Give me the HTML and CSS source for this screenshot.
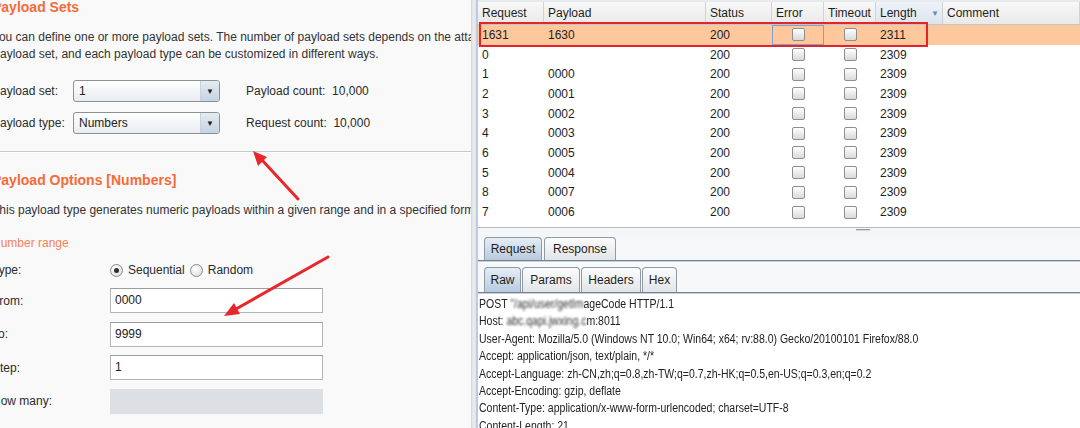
FILE: index.html
```html
<!DOCTYPE html>
<html>
<head>
<meta charset="utf-8">
<link rel="stylesheet" href="styles.css">
</head>
<body>
<div class="app">
  <section class="left">
    <div class="lc">
      <h2 class="title t1">Payload Sets</h2>
      <p class="desc d1">You can define one or more payload sets. The number of payload sets depends on the attack type defined in the Positions tab.<br>Payload set, and each payload type can be customized in different ways.</p>
      <div class="setrow">
        <span class="lbl">Payload set:</span>
        <div class="select"><span class="val">1</span><span class="drop">&#9660;</span></div>
        <span class="count">Payload count:&nbsp; 10,000</span>
      </div>
      <div class="setrow">
        <span class="lbl">Payload type:</span>
        <div class="select"><span class="val">Numbers</span><span class="drop">&#9660;</span></div>
        <span class="count">Request count:&nbsp; 10,000</span>
      </div>
      <div class="sep"></div>
      <h2 class="title t2">Payload Options [Numbers]</h2>
      <p class="desc d2">This payload type generates numeric payloads within a given range and in a specified format.</p>
      <div class="sub">Number range</div>
      <div class="frow typerow">
        <span class="flbl">Type:</span>
        <div class="radios">
          <span class="radio on"></span><span class="rtxt">Sequential</span>
          <span class="radio"></span><span class="rtxt">Random</span>
        </div>
      </div>
      <div class="frow">
        <span class="flbl">From:</span>
        <div class="input">0000</div>
      </div>
      <div class="frow">
        <span class="flbl">To:</span>
        <div class="input">9999</div>
      </div>
      <div class="frow">
        <span class="flbl">Step:</span>
        <div class="input">1</div>
      </div>
      <div class="frow">
        <span class="flbl">How many:</span>
        <div class="input disabled"></div>
      </div>
    </div>
  </section>
  <div class="divider"></div>
  <section class="right">
    <div class="table">
      <div class="row head">
        <div class="c">Request</div>
        <div class="c">Payload</div>
        <div class="c">Status</div>
        <div class="c">Error</div>
        <div class="c">Timeout</div>
        <div class="c sorted">Length<span class="sort">&#9660;</span></div>
        <div class="c">Comment</div>
      </div>
      <div class="row sel">
        <div class="c">1631</div><div class="c">1630</div><div class="c">200</div>
        <div class="c cb focus"><span class="chk"></span></div><div class="c cb"><span class="chk"></span></div>
        <div class="c">2311</div><div class="c"></div>
      </div>
      <div class="row">
        <div class="c">0</div><div class="c"></div><div class="c">200</div>
        <div class="c cb"><span class="chk"></span></div><div class="c cb"><span class="chk"></span></div>
        <div class="c">2309</div><div class="c"></div>
      </div>
      <div class="row">
        <div class="c">1</div><div class="c">0000</div><div class="c">200</div>
        <div class="c cb"><span class="chk"></span></div><div class="c cb"><span class="chk"></span></div>
        <div class="c">2309</div><div class="c"></div>
      </div>
      <div class="row">
        <div class="c">2</div><div class="c">0001</div><div class="c">200</div>
        <div class="c cb"><span class="chk"></span></div><div class="c cb"><span class="chk"></span></div>
        <div class="c">2309</div><div class="c"></div>
      </div>
      <div class="row">
        <div class="c">3</div><div class="c">0002</div><div class="c">200</div>
        <div class="c cb"><span class="chk"></span></div><div class="c cb"><span class="chk"></span></div>
        <div class="c">2309</div><div class="c"></div>
      </div>
      <div class="row">
        <div class="c">4</div><div class="c">0003</div><div class="c">200</div>
        <div class="c cb"><span class="chk"></span></div><div class="c cb"><span class="chk"></span></div>
        <div class="c">2309</div><div class="c"></div>
      </div>
      <div class="row">
        <div class="c">6</div><div class="c">0005</div><div class="c">200</div>
        <div class="c cb"><span class="chk"></span></div><div class="c cb"><span class="chk"></span></div>
        <div class="c">2309</div><div class="c"></div>
      </div>
      <div class="row">
        <div class="c">5</div><div class="c">0004</div><div class="c">200</div>
        <div class="c cb"><span class="chk"></span></div><div class="c cb"><span class="chk"></span></div>
        <div class="c">2309</div><div class="c"></div>
      </div>
      <div class="row">
        <div class="c">8</div><div class="c">0007</div><div class="c">200</div>
        <div class="c cb"><span class="chk"></span></div><div class="c cb"><span class="chk"></span></div>
        <div class="c">2309</div><div class="c"></div>
      </div>
      <div class="row">
        <div class="c">7</div><div class="c">0006</div><div class="c">200</div>
        <div class="c cb"><span class="chk"></span></div><div class="c cb"><span class="chk"></span></div>
        <div class="c">2309</div><div class="c"></div>
      </div>
    </div>
    <div class="splitter"><span class="grip"></span></div>
    <div class="tabs main">
      <div class="tab active w-req">Request</div>
      <div class="tab w-resp">Response</div>
    </div>
    <div class="tabs subtabs">
      <div class="tab active w-raw">Raw</div>
      <div class="tab w-params">Params</div>
      <div class="tab w-headers">Headers</div>
      <div class="tab w-hex">Hex</div>
    </div>
    <div class="raw">
      <div class="rawin">
        <div>POST <span class="blur">"/api/user/getIm</span>ageCode HTTP/1.1</div>
        <div>Host: <span class="blur">abc.qapi.jwxing.c</span>m:8011</div>
        <div>User-Agent: Mozilla/5.0 (Windows NT 10.0; Win64; x64; rv:88.0) Gecko/20100101 Firefox/88.0</div>
        <div>Accept: application/json, text/plain, */*</div>
        <div>Accept-Language: zh-CN,zh;q=0.8,zh-TW;q=0.7,zh-HK;q=0.5,en-US;q=0.3,en;q=0.2</div>
        <div>Accept-Encoding: gzip, deflate</div>
        <div>Content-Type: application/x-www-form-urlencoded; charset=UTF-8</div>
        <div>Content-Length: 21</div>
      </div>
    </div>
    <div class="redbox"></div>
  </section>
  <svg class="arrows" width="1080" height="428" viewBox="0 0 1080 428">
    <line x1="298" y1="199" x2="262" y2="160" stroke="#e8262b" stroke-width="3" stroke-linecap="round"/>
    <polygon points="253,151 267,157 258,166" fill="#e8262b"/>
    <line x1="328" y1="257" x2="236" y2="309" stroke="#e8262b" stroke-width="3" stroke-linecap="round"/>
    <polygon points="224,316 234,303 240,314" fill="#e8262b"/>
  </svg>
</div>
</body>
</html>
```

FILE: styles.css
```css
* { box-sizing: border-box; }
html, body { margin: 0; padding: 0; }
body {
  width: 1080px;
  height: 428px;
  overflow: hidden;
  font-family: "Liberation Sans", Arial, sans-serif;
  font-size: 12px;
  color: #2b2b2b;
  background: #f8f8f8;
}
.app {
  position: relative;
  display: flex;
  width: 1080px;
  height: 428px;
}

/* ---------- left pane ---------- */
.left {
  width: 471px;
  flex: none;
  overflow: hidden;
  background: #f9f9f9;
}
.lc {
  margin-left: -8px;
  width: 700px;
}
.title {
  margin: 0;
  font-size: 14px;
  line-height: 18px;
  font-weight: bold;
  color: #f66a38;
  white-space: nowrap;
}
.t1 { margin-top: -2px; }
.desc {
  margin: 0;
  line-height: 17px;
  white-space: nowrap;
  color: #333;
}
.d1 { margin-top: 12.5px; }
.setrow {
  display: flex;
  align-items: center;
  height: 22px;
  margin-top: 10px;
}
.d1 + .setrow { margin-top: 17.5px; }
.lbl { width: 81px; flex: none; }
.select {
  width: 147px;
  height: 22px;
  flex: none;
  display: flex;
  align-items: center;
  border: 1px solid #8b9097;
  border-radius: 3px;
  background: linear-gradient(#ffffff, #e9ecf0);
  overflow: hidden;
}
.select .val { flex: 1; padding-left: 5px; color: #222; }
.select .drop {
  width: 19px;
  height: 100%;
  display: flex;
  align-items: center;
  justify-content: center;
  font-size: 8px;
  color: #222;
  background: linear-gradient(#e4ebf2, #c6d3e0);
  border-left: 1px solid #c9d2dc;
}
.count { margin-left: 26px; }
.sep {
  margin-top: 17px;
  height: 2px;
  border-top: 1px solid #c6c9cd;
  border-bottom: 1px solid #ffffff;
  width: 490px;
}
.t2 { margin-top: 18px; }
.d2 { margin-top: 12.5px; }
.sub {
  margin-top: 16px;
  line-height: 17px;
  color: #f5825a;
}
.frow {
  display: flex;
  align-items: center;
  margin-top: 8.5px;
}
.frow.typerow { margin-top: 10px; height: 17px; }
.typerow + .frow { margin-top: 9.5px; }
.flbl { width: 118px; flex: none; }
.radios { display: flex; align-items: center; }
.radio {
  width: 13px;
  height: 13px;
  border-radius: 50%;
  border: 1px solid #8a8a8a;
  background: radial-gradient(circle at 40% 35%, #ffffff, #d8d8d8);
  display: inline-flex;
  align-items: center;
  justify-content: center;
}
.radio.on::after {
  content: "";
  width: 5px;
  height: 5px;
  border-radius: 50%;
  background: #2d2d2d;
}
.rtxt { margin-left: 5px; margin-right: 5px; }
.input {
  width: 213px;
  height: 25px;
  border: 1px solid #b5b5b5;
  border-top-color: #9d9d9d;
  background: #ffffff;
  padding-left: 4px;
  line-height: 23px;
  color: #222;
}
.input.disabled {
  background: #dcdfe3;
  border-color: #dcdfe3;
}

/* ---------- divider ---------- */
.divider {
  width: 5px;
  flex: none;
  background: linear-gradient(90deg, #d2d2d2, #ececec 40%, #e4e4e4);
}

/* ---------- right pane ---------- */
.right {
  position: relative;
  flex: 1;
  min-width: 0;
  border-left: 2px solid #b7cde3;
  background: #ffffff;
  display: flex;
  flex-direction: column;
}
.table {
  height: 228px;
  flex: none;
  background: #ffffff;
  border-top: 2px solid #e6ebf0;
  border-bottom: 1px solid #b9b9b9;
}
.row {
  display: grid;
  grid-template-columns: 66px 162px 66px 52px 52px 67px 1fr;
  height: 19.7px;
  align-items: center;
  color: #1e1e1e;
}
.row .c {
  padding-left: 4px;
  white-space: nowrap;
  height: 100%;
  display: flex;
  align-items: center;
}
.row.head {
  height: 23px;
  background: linear-gradient(#f8f8f8, #e9e9e9);
  border-bottom: 1px solid #c4c4c4;
}
.row.head .c {
  border-right: 1px solid #d2d2d2;
  padding-left: 4px;
}
.row.head .c.sorted {
  background: linear-gradient(#eef3f8, #dbe4ee);
}
.sort {
  margin-left: auto;
  margin-right: 3px;
  font-size: 8px;
  color: #6c8bad;
}
.row.sel { background: #fec89c; }
.c.cb { justify-content: center; padding-left: 0; }
.c.focus { border: 1px solid #7ea3cc; }
.chk {
  width: 13px;
  height: 13px;
  border: 1px solid #8e8e8e;
  border-radius: 2px;
  background: linear-gradient(#ffffff, #d9d9d9);
}
.splitter {
  height: 9px;
  flex: none;
  position: relative;
  background: #f4f6f8;
}
.grip {
  position: absolute;
  left: 378px;
  top: 1px;
  width: 14px;
  height: 2px;
  border-top: 1px solid #9a9a9a;
  border-bottom: 1px solid #d8d8d8;
}
.tabs {
  display: flex;
  flex: none;
  align-items: flex-end;
  gap: 2px;
  padding-left: 6px;
  background: #f7f8f9;
  border-bottom: 1px solid #6f8399;
  box-shadow: 0 1px 0 #c5d1dd;
}
.tabs.main { height: 24px; }
.tabs.subtabs { margin-top: 2px; padding-top: 4px; height: 30px; gap: 1px; }
.tab {
  height: 23px;
  display: flex;
  align-items: center;
  justify-content: center;
  border: 1px solid #8e9aa7;
  border-bottom: none;
  border-radius: 4px 4px 0 0;
  background: linear-gradient(#fcfcfc, #e2e4e6);
  color: #1e1e1e;
}
.subtabs .tab { height: 25px; }
.tab.active { background: linear-gradient(#e6edf5, #b8cadc); }
.w-req { width: 58px; }
.w-resp { width: 72px; }
.w-raw { width: 37px; }
.w-params { width: 58px; }
.w-headers { width: 60px; }
.w-hex { width: 35px; }
.raw {
  flex: 1;
  margin-top: 1px;
  padding-top: 2px;
  padding-left: 1px;
  background: #ffffff;
  overflow: hidden;
}
.rawin {
  line-height: 17.4px;
  white-space: nowrap;
  color: #222;
  transform: scaleX(0.875);
  transform-origin: left top;
}
.blur { filter: blur(1.2px); color: #333; }
.redbox {
  position: absolute;
  left: 1px;
  top: 22px;
  width: 449px;
  height: 25px;
  border: 2px solid #e5232b;
}
.arrows {
  position: absolute;
  left: 0;
  top: 0;
  pointer-events: none;
}
```
